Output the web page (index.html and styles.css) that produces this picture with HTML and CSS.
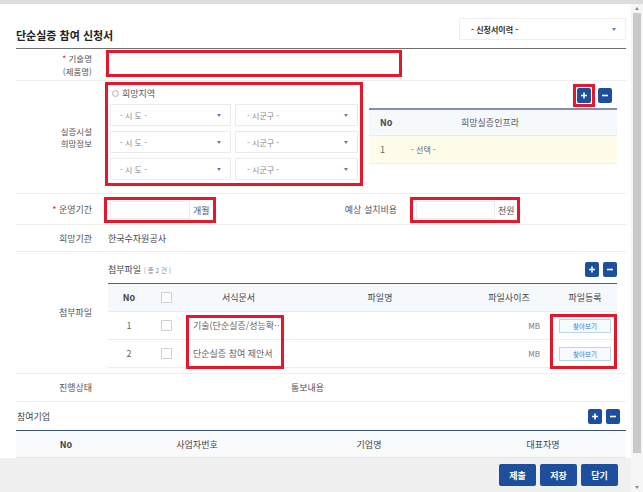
FILE: index.html
```html
<!DOCTYPE html>
<html lang="ko">
<head>
<meta charset="utf-8">
<title>단순실증 참여 신청서</title>
<link rel="stylesheet" href="styles.css">
</head>
<body>
<div class="topbar"></div>
<div class="frame">
  <div class="main">
    <div class="page">
      <div class="head">
        <h1 class="title">단순실증 참여 신청서</h1>
        <div class="hist-select"><span>- 신청서이력 -</span><i class="caret"></i></div>
      </div>

      <div class="row row-name">
        <div class="label two"><span><em>*</em> 기술명<br>(제품명)</span></div>
        <div class="value"><div class="red-input name-input"></div></div>
      </div>

      <div class="row row-facility">
        <div class="label two"><span>실증시설<br>희망정보</span></div>
        <div class="value facility">
          <div class="region-box">
            <div class="radio"><i></i><span>희망지역</span></div>
            <div class="sel-row">
              <div class="sel s1"><span>- 시 도 -</span><i class="caret"></i></div>
              <div class="sel s2"><span>- 시군구 -</span><i class="caret"></i></div>
            </div>
            <div class="sel-row">
              <div class="sel s1"><span>- 시 도 -</span><i class="caret"></i></div>
              <div class="sel s2"><span>- 시군구 -</span><i class="caret"></i></div>
            </div>
            <div class="sel-row">
              <div class="sel s1"><span>- 시 도 -</span><i class="caret"></i></div>
              <div class="sel s2"><span>- 시군구 -</span><i class="caret"></i></div>
            </div>
          </div>
          <div class="infra">
            <div class="btns infra-btns">
              <span class="hl"><b class="sq"><svg viewBox="0 0 14 15" width="14" height="15"><path d="M7 4.5v6M4 7.5h6" stroke="#fff" stroke-width="1.6"/></svg></b></span>
              <b class="sq"><svg viewBox="0 0 14 15" width="14" height="15"><path d="M4 7.5h6" stroke="#fff" stroke-width="1.6"/></svg></b>
            </div>
            <div class="infra-table">
              <div class="th c-no">No</div><div class="th c-name">희망실증인프라</div><div class="th"></div>
              <div class="td c-no">1</div><div class="td c-sel">- 선택 -</div><div class="td"></div>
            </div>
          </div>
        </div>
      </div>

      <div class="row row-period">
        <div class="label"><span><em>*</em> 운영기간</span></div>
        <div class="value period">
          <div class="red-input unit-box box-month"><div class="inner"></div><span class="unit">개월</span></div>
          <div class="mid-label">예상 설치비용</div>
          <div class="red-input unit-box box-cost"><div class="inner"></div><span class="unit">천원</span></div>
        </div>
      </div>

      <div class="row row-org">
        <div class="label"><span>희망기관</span></div>
        <div class="value org">한국수자원공사</div>
      </div>

      <div class="row row-files">
        <div class="label"><span>첨부파일</span></div>
        <div class="value files">
          <div class="files-head">
            <div class="files-title">첨부파일 <small>[ 총 2 건 ]</small></div>
            <div class="btns">
              <b class="sq"><svg viewBox="0 0 14 15" width="14" height="15"><path d="M7 4.5v6M4 7.5h6" stroke="#fff" stroke-width="1.6"/></svg></b>
              <b class="sq"><svg viewBox="0 0 14 15" width="14" height="15"><path d="M4 7.5h6" stroke="#fff" stroke-width="1.6"/></svg></b>
            </div>
          </div>
          <div class="file-table">
            <div class="fth">No</div><div class="fth"><i class="chk"></i></div><div class="fth">서식문서</div><div class="fth">파일명</div><div class="fth">파일사이즈</div><div class="fth">파일등록</div>
            <div class="ftd">1</div><div class="ftd"><i class="chk"></i></div><div class="ftd doc">기술(단순실증/성능확…</div><div class="ftd"></div><div class="ftd size">MB</div><div class="ftd"><span class="find">찾아보기</span></div>
            <div class="ftd">2</div><div class="ftd"><i class="chk"></i></div><div class="ftd doc">단순실증 참여 제안서</div><div class="ftd"></div><div class="ftd size">MB</div><div class="ftd"><span class="find">찾아보기</span></div>
            <div class="mark mark-doc"></div>
            <div class="mark mark-find"></div>
          </div>
        </div>
      </div>

      <div class="row row-status">
        <div class="label"><span>진행상태</span></div>
        <div class="value status"><span class="notice">통보내용</span></div>
      </div>

      <div class="company">
        <div class="company-head">
          <h2>참여기업</h2>
          <div class="btns">
            <b class="sq"><svg viewBox="0 0 14 15" width="14" height="15"><path d="M7 4.5v6M4 7.5h6" stroke="#fff" stroke-width="1.6"/></svg></b>
            <b class="sq"><svg viewBox="0 0 14 15" width="14" height="15"><path d="M4 7.5h6" stroke="#fff" stroke-width="1.6"/></svg></b>
          </div>
        </div>
        <div class="company-table">
          <div>No</div><div>사업자번호</div><div>기업명</div><div>대표자명</div>
        </div>
      </div>
    </div>
    <div class="footer">
      <button class="act">제출</button>
      <button class="act">저장</button>
      <button class="act">닫기</button>
    </div>
  </div>
  <div class="scrollbar">
    <i class="arr up"></i>
    <div class="thumb"></div>
    <div class="track"></div>
    <i class="arr down"></i>
  </div>
</div>
</body>
</html>
```
FILE: styles.css
```css
* { box-sizing: border-box; margin: 0; padding: 0; }
html, body { width: 643px; height: 492px; overflow: hidden; }
body {
  font-family: "Noto Sans CJK KR", "Noto Sans", sans-serif;
  font-size: 9px;
  color: #555;
  background: #fff;
}
.topbar { height: 4px; background: #dcdcdc; }
.frame { display: flex; height: 488px; }
.main { width: 631px; display: flex; flex-direction: column; }
.page { flex: 1; padding: 14px 5px 0 16px; overflow: hidden; }

/* header */
.head {
  height: 31px;
  border-bottom: 1px solid #707070;
  display: flex;
  justify-content: space-between;
  align-items: flex-start;
}
.title {
  font-size: 11px;
  font-weight: 700;
  color: #222;
  margin-top: 9px;
  line-height: 16px;
}
.hist-select {
  width: 167px;
  height: 22px;
  border: 1px solid #eeeeee;
  display: flex;
  align-items: center;
  justify-content: space-between;
  padding: 0 9px 0 11px;
  font-size: 8px;
  font-weight: 700;
  color: #333;
}
.caret {
  width: 0; height: 0;
  border-left: 2.5px solid transparent;
  border-right: 2.5px solid transparent;
  border-top: 3px solid #5b7fae;
}

/* rows */
.row { display: flex; border-bottom: 1px solid #ededed; }
.label {
  width: 84px;
  flex: none;
  display: flex;
  align-items: center;
  justify-content: flex-end;
  padding-right: 8px;
  text-align: right;
  line-height: 13px;
  color: #555;
}
.label.two { font-size: 8.5px; line-height: 12.5px; }
.label em { font-style: normal; color: #e3182d; }
.value { flex: 1; }
.red-input { border: 3px solid #e3182d; background: #fff; }

.row-name { height: 32px; }
.row-name .value { padding: 1px 0 0 6px; }
.name-input { width: 296px; height: 27px; }

.row-facility { height: 113px; }
.facility { display: flex; align-items: flex-start; padding-left: 5px; }
.region-box {
  width: 258px;
  height: 104px;
  margin-top: 1px;
  border: 3px solid #e3182d;
  padding: 2px 2px 0 2px;
  display: flex;
  flex-direction: column;
  gap: 5px;
}
.radio { height: 12px; display: flex; align-items: center; gap: 3px; padding-left: 2px; color: #555; }
.radio i { width: 7px; height: 7px; border-radius: 50%; border: 1px solid #b9b9b9; background: #f4f4f4; }
.sel-row { display: flex; gap: 4px; }
.sel {
  height: 22px;
  border: 1px solid #ebebeb;
  display: flex;
  align-items: center;
  justify-content: space-between;
  padding: 0 9px 0 9px;
  font-size: 8px;
  color: #888;
}
.s1 { width: 121px; }
.s2 { width: 123px; padding-left: 11px; }

.infra { width: 248px; margin: 3px 0 0 6px; }
.btns { display: flex; justify-content: flex-end; align-items: center; gap: 4px; }
.infra-btns { padding-right: 5px; gap: 3px; height: 23px; }
.hl { border: 3px solid #e3182d; padding: 1px; display: flex; }
.sq {
  width: 14px; height: 15px;
  background: #1d4f9c;
  border-radius: 2px;
  display: flex;
}
.infra-table {
  margin-top: 1px;
  border-top: 2px solid #8290a8;
  display: grid;
  grid-template-columns: 40px 162px 1fr;
}
.infra-table .th {
  height: 26px;
  background: #f6f9fc;
  border-bottom: 1px solid #e6ebf1;
  display: flex; align-items: center;
  font-weight: 700; color: #444;
}
.infra-table .c-no { padding-left: 11px; }
.infra-table .c-name { justify-content: center; font-weight: 400; color: #555; }
.infra-table .td {
  height: 28px;
  background: #fffcea;
  border-bottom: 1px solid #efefe6;
  display: flex; align-items: center;
  color: #666;
}
.infra-table .td.c-no { font-weight: 400; }
.infra-table .c-sel { padding-left: 2px; font-size: 8px; }

.row-period { height: 31px; }
.period { display: flex; align-items: flex-start; padding: 3px 0 0 4px; }
.unit-box { height: 26px; display: flex; align-items: center; padding: 0 2px 0 3px; white-space: nowrap; }
.unit-box .inner { height: 18px; border: 1px solid #ececec; flex: none; }
.unit { margin-left: 3px; color: #555; }
.box-month { width: 112px; }
.box-month .inner { width: 80px; }
.mid-label { width: 181px; text-align: right; line-height: 26px; color: #555; white-space: nowrap; }
.box-cost { width: 110px; margin-left: 13px; }
.box-cost .inner { width: 79px; }

.row-org { height: 27px; }
.org { display: flex; align-items: center; padding-left: 8px; color: #444; }

.row-files { height: 122px; }
.files { padding: 10px 9px 0 8px; }
.files-head { display: flex; justify-content: space-between; align-items: center; height: 15px; }
.files-title { color: #444; }
.files-title small { font-size: 6.5px; color: #888; }
.file-table {
  position: relative;
  margin-top: 6px;
  border-top: 1px solid #4f6180;
  display: grid;
  grid-template-columns: 42px 32px 113px 170px 88px 64px;
}
.fth, .ftd {
  height: 28px;
  border-bottom: 1px solid #e9edf1;
  display: flex; align-items: center; justify-content: center;
}
.fth { background: #f6f9fc; color: #444; }
.fth:first-child { font-weight: 700; }
.ftd { color: #666; }
.ftd.doc { justify-content: flex-start; padding-left: 11px; white-space: nowrap; overflow: hidden; }
.ftd.size { justify-content: flex-end; padding-right: 13px; font-size: 8px; color: #777; }
.chk { width: 11px; height: 11px; border: 1px solid #cfcfcf; border-radius: 1px; background: #fff; }
.find {
  width: 52px; height: 14px;
  border: 1px solid #b9d4ec;
  background: #f7fbff;
  font-size: 6.5px;
  color: #3b78c0;
  display: flex; align-items: center; justify-content: center;
}
.mark { position: absolute; border: 3px solid #e3182d; pointer-events: none; }
.mark-doc { left: 78px; top: 31px; width: 98px; height: 54px; }
.mark-find { left: 442px; top: 30px; width: 67px; height: 55px; }

.row-status { height: 28px; }
.status { display: flex; align-items: center; }
.notice { width: 224px; text-align: right; color: #555; }

.company-head {
  height: 28px;
  display: flex; justify-content: space-between; align-items: center;
  padding: 0 6px 0 1px;
}
.company-head h2 { font-size: 9px; font-weight: 400; color: #444; }
.company-table {
  border-top: 1px solid #3c5680;
  display: grid;
  grid-template-columns: 100px 162px 182px 166px;
  background: #f8fafc;
  border-bottom: 1px solid #e3e8ee;
}
.company-table div {
  height: 26px;
  display: flex; align-items: center; justify-content: center;
  color: #444;
}
.company-table div:first-child { font-weight: 700; }

.footer {
  height: 34px;
  flex: none;
  background: #f0f0f0;
  display: flex;
  justify-content: flex-end;
  align-items: center;
  gap: 4px;
  padding-right: 13px;
}
.act {
  width: 37px; height: 22px;
  border: 0;
  border-radius: 2px;
  background: #1d4f9c;
  color: #fff;
  font-family: "Noto Sans CJK KR", sans-serif;
  font-size: 9px;
  font-weight: 700;
}

.scrollbar {
  width: 12px;
  background: #f6f6f6;
  display: flex;
  flex-direction: column;
  align-items: center;
}
.arr { width: 0; height: 0; border-left: 2.5px solid transparent; border-right: 2.5px solid transparent; margin: 3px 0; }
.arr.up { border-bottom: 3px solid #8a8a8a; }
.arr.down { border-top: 3px solid #8a8a8a; }
.thumb { width: 8px; height: 440px; background: #c9c9c9; }
.track { flex: 1; }
```
